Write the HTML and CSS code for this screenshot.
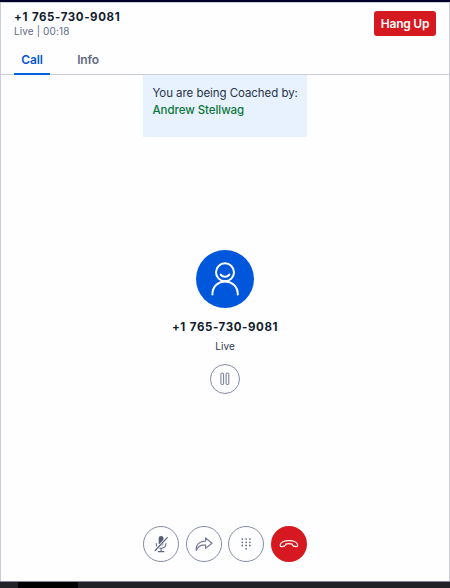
FILE: index.html
```html
<!DOCTYPE html>
<html lang="en">
<head>
<meta charset="utf-8">
<title>Call</title>
<link rel="stylesheet" href="styles.css">
</head>
<body>
<div class="phone">
  <header class="header">
    <div class="header-row">
      <div>
        <div class="header-number">+1 765-730-9081</div>
        <div class="header-status">Live | 00:18</div>
      </div>
      <button class="hang-up">Hang Up</button>
    </div>
    <nav class="tabs">
      <a class="tab tab-active">Call</a>
      <a class="tab">Info</a>
    </nav>
  </header>
  <main class="content">
    <div class="coach">
      <div>You are being Coached by:</div>
      <div class="coach-name">Andrew Stellwag</div>
    </div>
    <div class="caller">
      <svg class="avatar" viewBox="0 0 58 58" fill="none" stroke="#fff" stroke-width="2" stroke-linecap="round">
        <circle cx="29" cy="29" r="29" fill="#0057dc" stroke="none"/>
        <circle cx="29" cy="22.3" r="9"/>
        <path d="M24.7 24.6c1.9 2.9 6.7 2.9 8.6 0M16.4 44.5c0-17.3 25.4-17.3 25.4 0"/>
      </svg>
      <div class="caller-number">+1 765-730-9081</div>
      <div class="caller-status">Live</div>
      <button class="round hold" aria-label="Hold">
        <svg width="12" height="14" viewBox="0 0 12 14" fill="none" stroke="#707991">
          <rect x="1.9" y="1.2" width="2.7" height="11.2" rx=".6"/>
          <rect x="7.1" y="1.2" width="2.7" height="11.2" rx=".6"/>
        </svg>
      </button>
    </div>
    <div class="controls">
      <button class="round" aria-label="Mute">
        <svg width="18" height="18" viewBox="0 0 18 18" fill="none" stroke="#5d667d" stroke-width="1.1" stroke-linecap="round">
          <rect x="6.7" y="1" width="4.8" height="10" rx="2.4" fill="#535d75" stroke="none"/>
          <path d="M4.2 8.5c0 6.4 9.8 6.4 9.8 0M9.1 13.3v3.2M6.3 16.6h5.6"/>
          <path d="M3.2 15.5 15.2 2.6" stroke="#fefdff" stroke-width="2.6"/>
          <path d="M3.2 15.5 15.2 2.6" stroke-width="1.3"/>
        </svg>
      </button>
      <button class="round" aria-label="Transfer">
        <svg width="18" height="18" viewBox="0 0 18 18" fill="none" stroke="#717a91" stroke-width="1.2" stroke-linejoin="round">
          <path d="M10.6 2.9 17 8.3l-6.4 5.1v-3.2C6.3 9.6 2.9 11.2 1.4 15.4.3 9.9 4.8 6 10.6 6.1Z"/>
        </svg>
      </button>
      <button class="round" aria-label="Keypad">
        <svg width="12" height="14" viewBox="0 0 12 14" fill="none" stroke="#69728a" stroke-width="1.8" stroke-linecap="round" stroke-dasharray="0 3.8">
          <path d="M2.3 2.1h8M2.3 5.3h8M2.3 8.5h8M6.1 11.8h.1"/>
        </svg>
      </button>
      <button class="round end" aria-label="End call">
        <svg width="20" height="12" viewBox="0 0 20 12" fill="none" stroke="#fff" stroke-width="1.2" stroke-linejoin="round">
          <path d="M1.2 7.1C1.2 1.2 18.6 1.2 18.6 7.1c0 1.3-.5 1.7-1.5 1.6l-2.6-.5c-1-.2-1.3-.7-1.3-2.1-2.1-.7-4.5-.7-6.6 0 0 1.4-.3 1.9-1.3 2.1l-2.6.5c-1 .1-1.5-.3-1.5-1.6Z"/>
        </svg>
      </button>
    </div>
  </main>
  <footer class="strip"><div class="strip-item"></div></footer>
</div>
</body>
</html>
```
FILE: styles.css
```css
* {
  box-sizing: border-box;
}

body {
  margin: 0;
  font-family: Inter, "Liberation Sans", sans-serif;
  color: #121c2d;
}

button {
  margin: 0;
  padding: 0;
  border: 0;
  font: inherit;
}

.phone {
  display: flex;
  flex-direction: column;
  height: 588px;
  background: #fefdff;
  border-top: 2px solid #03002e;
}

.header {
  height: 73px;
  padding: 7px 14px 0 13px;
  border: 1px solid #cacdd8;
}

.header-row {
  display: flex;
  justify-content: space-between;
  height: 38px;
}

.header-number {
  font-size: 11.5px;
  font-weight: 700;
  line-height: 14px;
  letter-spacing: 0.6px;
  word-spacing: 0.6px;
}

.header-status {
  padding-top: 1px;
  font-size: 10px;
  line-height: 13px;
  letter-spacing: 0.12px;
  color: #606b85;
}

.hang-up {
  width: 62px;
  height: 25px;
  margin-top: 1px;
  margin-right: -1px;
  border-radius: 3px;
  background: #d61920;
  color: #fff;
  font-size: 12px;
  font-weight: 600;
  line-height: 25px;
  letter-spacing: -0.25px;
}

.tabs {
  display: flex;
  gap: 20px;
}

.tab {
  width: 36px;
  height: 27px;
  padding-top: 5px;
  font-size: 12px;
  font-weight: 600;
  line-height: 14px;
  letter-spacing: -0.15px;
  text-align: center;
  color: #606b85;
}

.tab-active {
  border-bottom: 2px solid #0263e0;
  color: #0558cf;
}

.content {
  display: flex;
  flex: 1;
  flex-direction: column;
  align-items: center;
  border: solid #cacdd8;
  border-width: 0 1px;
}

.coach {
  width: 164px;
  height: 62px;
  padding: 10px 0 0 9.5px;
  background: #e8f2ff;
  font-size: 11.5px;
  line-height: 16.5px;
  letter-spacing: -0.06px;
  white-space: nowrap;
  color: #283247;
}

.coach-name {
  color: #0d7537;
  font-weight: 500;
}

.caller {
  display: flex;
  flex-direction: column;
  align-items: center;
  margin-top: 113px;
}

.avatar {
  width: 58px;
  height: 58px;
}

.caller-number {
  margin-top: 11px;
  font-size: 11.5px;
  font-weight: 700;
  line-height: 16px;
  letter-spacing: 0.6px;
  word-spacing: 0.6px;
}

.caller-status {
  margin-top: 4px;
  font-size: 10px;
  line-height: 14px;
  letter-spacing: 0.1px;
  color: #30394d;
}

.round {
  display: flex;
  align-items: center;
  justify-content: center;
  width: 36px;
  height: 36px;
  border: 1px solid #858da3;
  border-radius: 50%;
  background: #fefdff;
}

.hold {
  width: 30px;
  height: 30px;
  margin-top: 11px;
}

.controls {
  display: flex;
  gap: 6.5px;
  margin-top: auto;
  padding-bottom: 19px;
}

.end {
  border: 0;
  background: #d61920;
}

.strip {
  height: 7px;
  padding-left: 18px;
  border-top: 1px solid #858295;
  background: #202227;
}

.strip-item {
  width: 60px;
  height: 6px;
  background: #000;
}
```
